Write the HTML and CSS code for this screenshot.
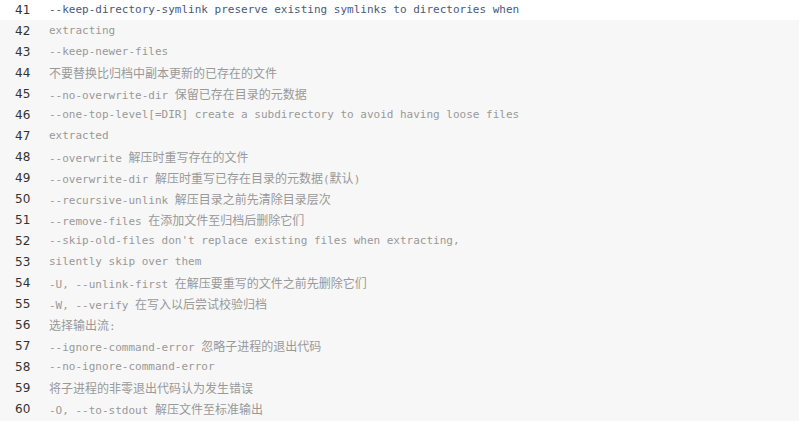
FILE: index.html
```html
<!DOCTYPE html>
<html>
<head>
<meta charset="utf-8">
<link rel="stylesheet" href="styles.css">
</head>
<body>
<div class="code">
  <div class="row active"><span class="num">41</span><span class="txt">--keep-directory-symlink preserve existing symlinks to directories when</span></div>
  <div class="row"><span class="num">42</span><span class="txt">extracting</span></div>
  <div class="row"><span class="num">43</span><span class="txt">--keep-newer-files</span></div>
  <div class="row"><span class="num">44</span><span class="txt"><span class="cn">不要替换比归档中副本更新的已存在的文件</span></span></div>
  <div class="row"><span class="num">45</span><span class="txt">--no-overwrite-dir <span class="cn">保留已存在目录的元数据</span></span></div>
  <div class="row"><span class="num">46</span><span class="txt">--one-top-level[=DIR] create a subdirectory to avoid having loose files</span></div>
  <div class="row"><span class="num">47</span><span class="txt">extracted</span></div>
  <div class="row"><span class="num">48</span><span class="txt">--overwrite <span class="cn">解压时重写存在的文件</span></span></div>
  <div class="row"><span class="num">49</span><span class="txt">--overwrite-dir <span class="cn">解压时重写已存在目录的元数据</span>(<span class="cn">默认</span>)</span></div>
  <div class="row"><span class="num">50</span><span class="txt">--recursive-unlink <span class="cn">解压目录之前先清除目录层次</span></span></div>
  <div class="row"><span class="num">51</span><span class="txt">--remove-files <span class="cn">在添加文件至归档后删除它们</span></span></div>
  <div class="row"><span class="num">52</span><span class="txt">--skip-old-files don't replace existing files when extracting,</span></div>
  <div class="row"><span class="num">53</span><span class="txt">silently skip over them</span></div>
  <div class="row"><span class="num">54</span><span class="txt">-U, --unlink-first <span class="cn">在解压要重写的文件之前先删除它们</span></span></div>
  <div class="row"><span class="num">55</span><span class="txt">-W, --verify <span class="cn">在写入以后尝试校验归档</span></span></div>
  <div class="row"><span class="num">56</span><span class="txt"><span class="cn">选择输出流</span>:</span></div>
  <div class="row"><span class="num">57</span><span class="txt">--ignore-command-error <span class="cn">忽略子进程的退出代码</span></span></div>
  <div class="row"><span class="num">58</span><span class="txt">--no-ignore-command-error</span></div>
  <div class="row"><span class="num">59</span><span class="txt"><span class="cn">将子进程的非零退出代码认为发生错误</span></span></div>
  <div class="row"><span class="num">60</span><span class="txt">-O, --to-stdout <span class="cn">解压文件至标准输出</span></span></div>
</div>
</body>
</html>
```
FILE: styles.css
```css
html, body {
  margin: 0;
  padding: 0;
  background: #f7f7f7;
  height: 100%;
  overflow: hidden;
}
.code {
  margin-top: -1px;
  font-family: "DejaVu Sans Mono", "Noto Sans CJK SC", monospace;
  font-size: 11px;
}
.row {
  display: flex;
  align-items: center;
  height: 21px;
  white-space: pre;
}
.row.active {
  background: #ffffff;
}
.num {
  width: 34px;
  padding-left: 15px;
  color: #333333;
  font-family: "DejaVu Sans", "Noto Sans", sans-serif;
  font-size: 12px;
}
.txt {
  color: #999999;
}
.cn {
  font-family: "Noto Sans CJK SC", sans-serif;
  font-size: 12px;
}
.row.active .txt {
  color: #4b5978;
}
```
